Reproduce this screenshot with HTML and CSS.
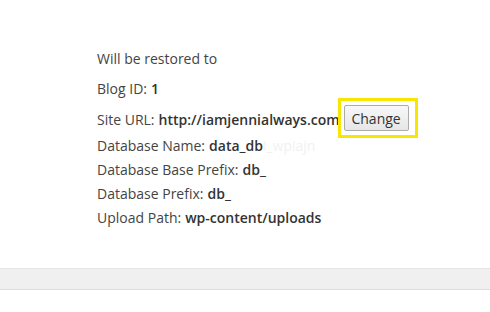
FILE: index.html
```html
<!DOCTYPE html>
<html lang="en">
<head>
    <meta charset="UTF-8">
    <meta name="viewport" content="width=device-width, initial-scale=1.0">
    <title>Restore</title>
    <link rel="stylesheet" href="styles.css">
</head>
<body>
    <div class="restore-box">
        <p class="restore-title">Will be restored to</p>
        <div class="restore-row">Blog ID: <strong>1</strong></div>
        <div class="restore-row row-url">
            Site URL: <strong>http://iamjennialways.com</strong>
            <span class="highlight"><button class="botao-change">Change</button></span>
        </div>
        <div class="restore-row">Database Name: <strong>data_db</strong><span class="faded">i_wpiajn</span></div>
        <div class="restore-row">Database Base Prefix: <strong>db_</strong></div>
        <div class="restore-row">Database Prefix: <strong>db_</strong></div>
        <div class="restore-row">Upload Path: <strong>wp-content/uploads</strong></div>
    </div>
    <div class="footer-bar"></div>
</body>
</html>
```

FILE: styles.css
```css
/* Reset */
* {
    margin: 0;
    padding: 0;
    box-sizing: border-box;
}

body {
    font-family: 'Open Sans', 'Liberation Sans', sans-serif;
    font-size: 14px;
    background-color: #fff;
    color: #444;
}

.restore-box {
    padding: 47px 0 0 97px;
    height: 268px;
}

.restore-title {
    line-height: 24px;
    margin-bottom: 5px;
}

.restore-row {
    display: flex;
    align-items: center;
    height: 24px;
    white-space: nowrap;
}

.restore-row strong {
    font-weight: 600;
    color: #333;
    margin-left: 4px;
}

/* linha com o botao destacado */
.row-url {
    height: 33px;
    padding-top: 5px;
}

.highlight {
    display: inline-block;
    border: 3px solid #f7e600;
    padding: 4px 6px 4px 3px;
    margin: 0 0 2px -2px;
}

.botao-change {
    display: block;
    font-family: inherit;
    font-size: 14px;
    color: #333;
    width: 65px;
    height: 26px;
    border: 1px solid #acacac;
    border-radius: 2px;
    background: linear-gradient(#f8f8f8, #e6e6e6);
    cursor: pointer;
}

.faded {
    color: #f1f1f1;
}

.footer-bar {
    height: 22px;
    background-color: #f0f0f0;
    border-top: 1px solid #e4e4e4;
    border-bottom: 1px solid #dddddd;
}
```
